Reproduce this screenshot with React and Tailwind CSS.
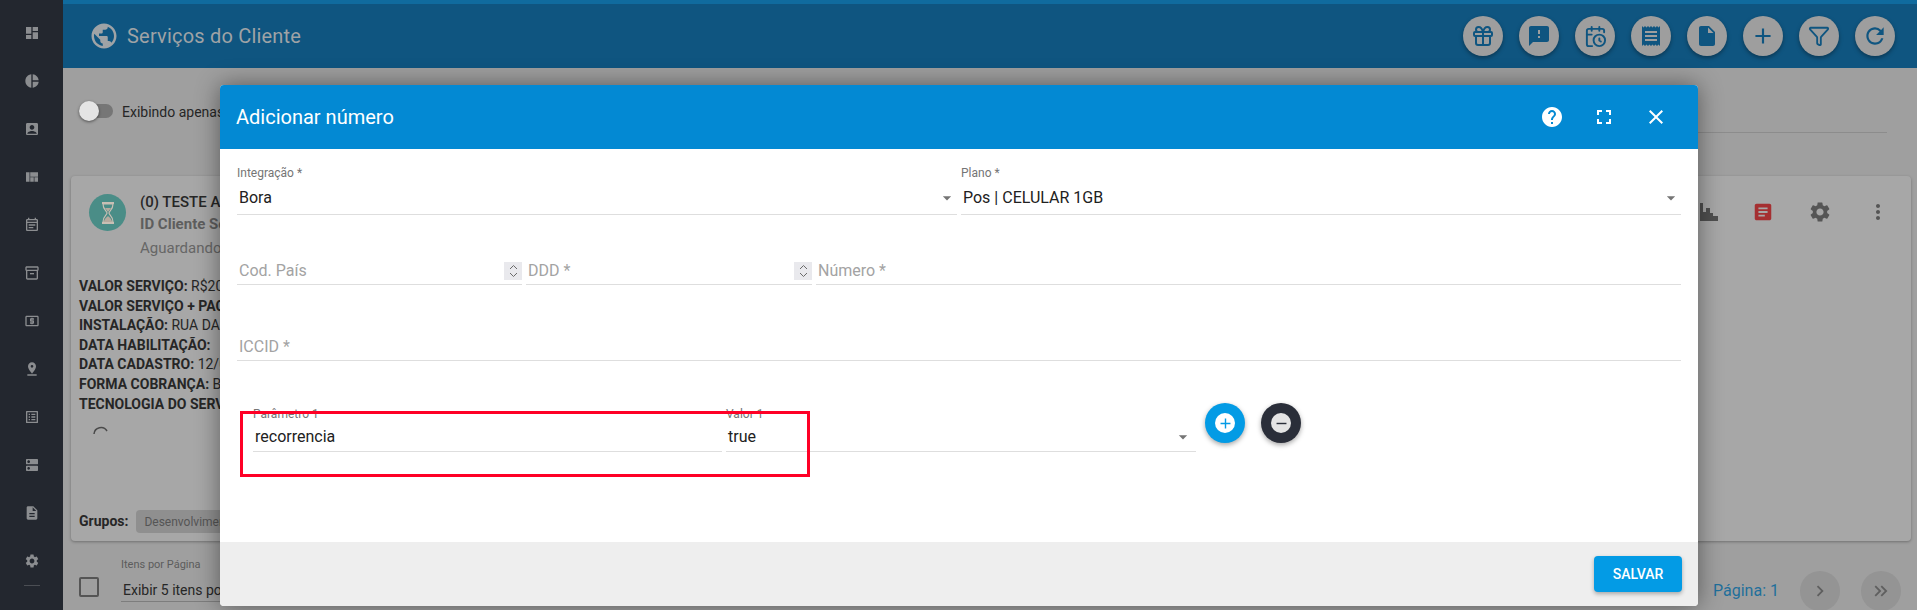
import React from "react";
import {
  MdDashboard, MdPieChart, MdAccountBox, MdViewQuilt, MdOutlineInventory2, MdLocalAtm, MdPinDrop,
  MdListAlt, MdDns, MdDescription, MdSettings, MdPublic, MdFeedback, MdReceipt, MdInsertDriveFile,
  MdAdd, MdRefresh, MdHelp, MdFullscreen, MdClose, MdMoreVert, MdArticle, MdArrowDropDown,
  MdChevronRight, MdKeyboardDoubleArrowRight, MdRemove, MdOutlineEventNote,
} from "react-icons/md";
import { Gift, CalendarClock, Filter } from "lucide-react";

const sideIcons = [
  MdDashboard, MdPieChart, MdAccountBox, MdViewQuilt, MdOutlineEventNote, MdOutlineInventory2,
  MdLocalAtm, MdPinDrop, MdListAlt, MdDns, MdDescription, MdSettings,
];

const infoLines = [
  ["VALOR SERVIÇO:", "R$20,00"],
  ["VALOR SERVIÇO + PACOTE:", "R$20,00"],
  ["INSTALAÇÃO:", "RUA DAS FLORES"],
  ["DATA HABILITAÇÃO:", ""],
  ["DATA CADASTRO:", "12/05/2023"],
  ["FORMA COBRANÇA:", "BOLETO"],
  ["TECNOLOGIA DO SERVIÇO:", ""],
];

const HeadButton = ({ children }) => (
  <div className="flex h-10 w-10 items-center justify-center rounded-full bg-[#9e9e9e] text-[#0f5580] shadow-[0_2px_4px_rgba(0,0,0,0.35)]">
    {children}
  </div>
);

const Spinner = () => (
  <div className="relative ml-auto flex h-[18px] w-[18px] shrink-0 flex-col items-center justify-center bg-[#e9e9ed] text-[#6b6b6b]">
    <svg width="9" height="14" viewBox="0 0 9 14" fill="none" stroke="currentColor" strokeWidth="1">
      <path d="M1 5l3.5-3.5L8 5M1 9l3.5 3.5L8 9" />
    </svg>
  </div>
);

const Placeholder = ({ text, spin, className }) => (
  <div className={`flex h-[26px] items-center border-b border-[#dedede] pb-[2px] ${className}`}>
    <span className="pl-[2px] text-[16px] text-[#a3a3a3]">{text}</span>
    {spin && <Spinner />}
  </div>
);

const SelectField = ({ label, value }) => (
  <div className="flex-1">
    <div className="text-[12px] leading-[14px] text-[#757575]">{label}</div>
    <div className="mt-[5px] flex h-[30px] items-center border-b border-[#dedede] pl-[2px] pb-[3px]">
      <span className="text-[16px] text-[#212121]">{value}</span>
      <MdArrowDropDown className="ml-auto text-[#757575]" size={20} />
    </div>
  </div>
);

const App = () => {
  return (
    <div className="relative flex h-[610px] w-[1917px] overflow-hidden bg-[#9f9f9f] font-['Roboto',sans-serif] text-[#262626]">
      {/* menu lateral */}
      <aside className="flex h-full w-[63px] shrink-0 flex-col items-center bg-[#23272f] pt-[9px]">
        {sideIcons.map((Icon, i) => (
          <div key={i} className="flex h-12 shrink-0 items-center justify-center text-[#8b8d90]">
            <Icon size={16} />
          </div>
        ))}
        <div className="mt-[0px] h-px w-4 bg-[#4b4e54]" />
      </aside>

      <div className="flex min-w-0 flex-1 flex-col">
        {/* barra superior */}
        <header className="flex h-[68px] shrink-0 items-center border-t-4 border-[#106b9e] bg-[#0f5580] pr-[22px] pl-[26px]">
          <MdPublic className="text-[#9fa3a6]" size={30} />
          <h1 className="ml-[8px] text-[20px] font-normal tracking-[0.2px] text-[#9fa3a6]">Serviços do Cliente</h1>
          <div className="ml-auto flex gap-4">
            <HeadButton><Gift size={24} strokeWidth={2} /></HeadButton>
            <HeadButton><MdFeedback size={24} /></HeadButton>
            <HeadButton><CalendarClock size={23} strokeWidth={2} /></HeadButton>
            <HeadButton><MdReceipt size={24} /></HeadButton>
            <HeadButton><MdInsertDriveFile size={24} /></HeadButton>
            <HeadButton><MdAdd size={26} /></HeadButton>
            <HeadButton><Filter size={22} strokeWidth={2} /></HeadButton>
            <HeadButton><MdRefresh size={26} /></HeadButton>
          </div>
        </header>

        <main className="flex min-h-0 flex-1 flex-col pr-[6px] pl-[8px]">
          <div className="flex h-[108px] shrink-0 items-start pt-[36px] pr-[24px] pl-[8px]">
            <div className="relative h-[14px] w-[34px] rounded-full bg-[#767676]">
              <div className="absolute top-[-3px] left-0 h-5 w-5 rounded-full bg-[#e4e4e4] shadow-[0_1px_3px_rgba(0,0,0,0.5)]" />
            </div>
            <span className="ml-[9px] text-[14px] leading-[16px]">Exibindo apenas</span>
            <div className="ml-4 h-[29px] flex-1 border-b border-[#8c8c8c]" />
          </div>

          {/* card do serviço */}
          <section className="flex h-[365px] shrink-0 flex-col rounded-[4px] bg-[#a7a7a7] px-[8px] pb-[8px] shadow-[0_1px_3px_rgba(0,0,0,0.3)]">
            <div className="flex pt-[17px]">
              <div className="mt-[1px] ml-[10px] flex h-[37px] w-[37px] items-center justify-center rounded-full bg-[#4a8d87]">
                <svg width="16" height="24" viewBox="0 0 16 24">
                  <path d="M2 2h12M2 22h12" stroke="#c9bfb4" strokeWidth="2" />
                  <path d="M3 3c0 6 4 7 4 9s-4 3-4 9h10c0-6-4-7-4-9s4-3 4-9z" fill="none" stroke="#c9bfb4" strokeWidth="1.2" />
                  <path d="M4 21c0-3 3-5 4-6 1 1 4 3 4 6zM5 7h6l-3 4z" fill="#b7aa9e" />
                </svg>
              </div>
              <div className="ml-[14px]">
                <div className="text-[15px] leading-[18px] font-medium">(0) TESTE ANTENA</div>
                <div className="mt-[4px] text-[15px] leading-[18px] font-bold text-[#5e5e5e]">ID Cliente Serviço</div>
                <div className="mt-[6px] text-[15px] leading-[18px] text-[#666666]">Aguardando</div>
              </div>
              <div className="mr-[13px] ml-auto flex h-[37px] items-center gap-[34px] text-[#555555]">
                <svg width="18" height="18" viewBox="0 0 18 18" fill="#4f4f4f">
                  <path d="M0 0h3v9h3v-4h4v5h3v3h5v5H0z" />
                </svg>
                <MdArticle className="text-[#a52f31]" size={22} />
                <MdSettings size={24} />
                <MdMoreVert size={24} />
              </div>
            </div>

            <div className="mt-[20px] text-[14px] leading-[19.6px]">
              {infoLines.map(([label, value]) => (
                <div key={label}>
                  <span className="font-bold">{label}</span> {value}
                </div>
              ))}
            </div>

            <svg className="mt-[11px] ml-[13px]" width="18" height="18" viewBox="0 0 18 18" fill="none" stroke="#4a4a4a" strokeWidth="1.5">
              <path d="M2 9a7 7 0 0 1 13-3" />
            </svg>

            <div className="mt-auto flex items-center">
              <span className="text-[14px] font-bold">Grupos:</span>
              <span className="ml-[8px] flex h-[23px] items-center rounded-[4px] bg-[#8f8f8f] px-2 text-[12px] text-[#555555]">Desenvolvimento</span>
            </div>
          </section>

          <div className="flex shrink-0 items-start pt-[17px] pl-[8px]">
            <div className="mt-[19px] h-5 w-5 rounded-[2px] border-2 border-[#555555]" />
            <div className="ml-[22px] w-[170px] border-b border-[#7d7d7d]">
              <div className="text-[11px] leading-[14px] text-[#5c5c5c]">Itens por Página</div>
              <div className="mt-[9px] pb-[2px] pl-[2px] text-[14px] leading-[18px] whitespace-nowrap">Exibir 5 itens por</div>
            </div>
            <div className="mr-[10px] ml-auto flex items-center gap-[21px] pt-[13px]">
              <span className="text-[16px] text-[#1f6f9b]">Página: 1</span>
              <div className="flex h-10 w-10 items-center justify-center rounded-full bg-[#949494] text-[#5f5f5f]"><MdChevronRight size={22} /></div>
              <div className="flex h-10 w-10 items-center justify-center rounded-full bg-[#949494] text-[#5f5f5f]"><MdKeyboardDoubleArrowRight size={22} /></div>
            </div>
          </div>
        </main>
      </div>

      {/* modal adicionar numero */}
      <div className="absolute top-[85px] left-[220px] flex h-[521px] w-[1478px] flex-col overflow-hidden rounded-[4px] bg-white shadow-[0_0_24px_rgba(0,0,0,0.45)]">
        <div className="flex h-16 shrink-0 items-center bg-[#0389d3] pr-[30px] pl-[16px] text-white">
          <h2 className="text-[20px] font-normal">Adicionar número</h2>
          <div className="ml-auto flex items-center gap-[28px]">
            <MdHelp size={24} />
            <MdFullscreen size={24} />
            <MdClose size={24} />
          </div>
        </div>

        <div className="relative min-h-0 flex-1 px-[17px] pt-[17px]">
          <div className="flex gap-1">
            <SelectField label="Integração *" value="Bora" />
            <SelectField label="Plano *" value="Pos | CELULAR 1GB" />
          </div>

          <div className="mt-[44px] flex gap-1">
            <Placeholder text="Cod. País" spin className="w-[285px]" />
            <Placeholder text="DDD *" spin className="w-[286px]" />
            <Placeholder text="Número *" className="flex-1" />
          </div>

          <Placeholder text="ICCID *" className="mt-[50px]" />

          <div className="mt-[46px] flex items-start pl-[16px]">
            <div className="w-[469px]">
              <div className="text-[12px] leading-[14px] text-[#757575]">Parâmetro 1</div>
              <div className="mt-[2px] flex h-[29px] items-center border-b border-[#dedede] pb-[1px] pl-[2px] text-[16px] text-[#212121]">recorrencia</div>
            </div>
            <div className="ml-1 w-[470px]">
              <div className="text-[12px] leading-[14px] text-[#757575]">Valor 1</div>
              <div className="mt-[2px] flex h-[29px] items-center border-b border-[#dedede] pl-[2px] text-[16px] text-[#212121]">
                true
                <MdArrowDropDown className="mr-[3px] ml-auto text-[#757575]" size={20} />
              </div>
            </div>
            <div className="mt-[-4px] ml-[9px] flex h-10 w-10 items-center justify-center rounded-full bg-[#039be5] shadow-[0_2px_5px_rgba(0,0,0,0.35)]">
              <div className="flex h-[20px] w-[20px] items-center justify-center rounded-full bg-white text-[#039be5]"><MdAdd size={17} /></div>
            </div>
            <div className="mt-[-4px] ml-4 flex h-10 w-10 items-center justify-center rounded-full bg-[#2a2e39] shadow-[0_2px_5px_rgba(0,0,0,0.35)]">
              <div className="flex h-[20px] w-[20px] items-center justify-center rounded-full bg-[#e4e4e4] text-[#2a2e39]"><MdRemove size={17} /></div>
            </div>
          </div>

          {/* destaque vermelho */}
          <div className="absolute top-[262px] left-[20px] h-[66px] w-[570px] border-[3px] border-[#ff0026]" />
        </div>

        <div className="flex h-16 shrink-0 items-center justify-end bg-[#eeeeee] pr-4">
          <button className="h-9 w-[88px] rounded-[4px] bg-[#039be5] text-[14px] font-medium text-white shadow-[0_2px_4px_rgba(0,0,0,0.3)]">SALVAR</button>
        </div>
      </div>
    </div>
  );
};

export default App;
